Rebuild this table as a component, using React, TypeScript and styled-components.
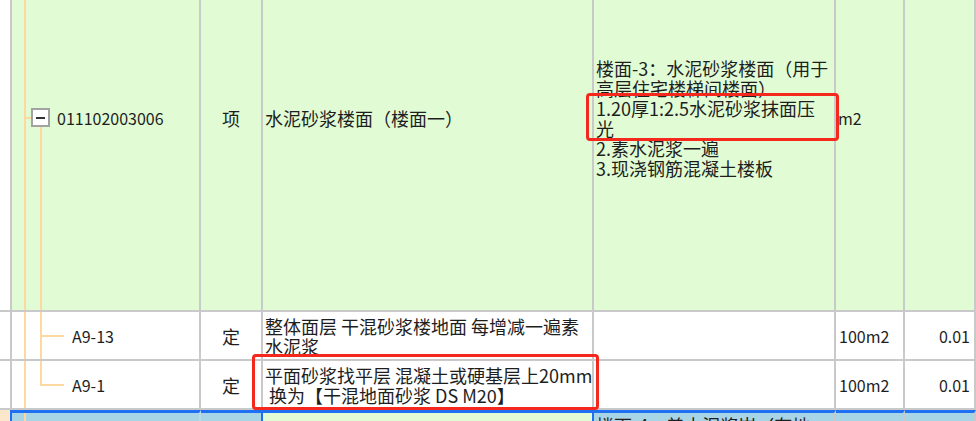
import React from "react";
import styled, { createGlobalStyle, css } from "styled-components";

const GREEN = "#e1fcd5";
const GRID = "#c9c9c9";
const ORANGE = "#fdd8a0";
const BLUE = "#1f6ff2";
const SEL = "#a8d5e5";
const PEACH = "#fde7cb";

const GlobalStyle = createGlobalStyle`
  html, body { margin: 0; padding: 0; background: #fff; overflow: hidden; }
  body {
    width: 976px; height: 421px;
    font-family: "Noto Sans CJK SC", "Noto Sans", sans-serif;
    color: #1e1e1e;
  }
`;

const Page = styled.div`
  position: relative;
  width: 976px;
  height: 421px;
  overflow: hidden;
`;

const Table = styled.div`
  margin-top: -75px;
  display: flex;
  flex-direction: column;
`;

const Row = styled.div<{ $h: number }>`
  display: grid;
  grid-template-columns: 12px 189px 62px 331px 242px 69px 1fr;
  height: ${(p) => p.$h}px;
`;

type Tone = "green" | "white" | "sel" | "peach";
const toneBg: Record<Tone, string> = {
  green: GREEN,
  white: "#ffffff",
  sel: SEL,
  peach: PEACH,
};

const Cell = styled.div<{
  $tone: Tone;
  $align?: "start" | "center" | "end";
  $selTop?: boolean;
  $rightColor?: string;
}>`
  box-sizing: border-box;
  min-width: 0;
  overflow: hidden;
  display: flex;
  align-items: center;
  justify-content: ${(p) =>
    p.$align === "center" ? "center" : p.$align === "end" ? "flex-end" : "flex-start"};
  background: ${(p) => toneBg[p.$tone]};
  border-right: 2px solid ${(p) => p.$rightColor ?? GRID};
  border-bottom: 2px solid ${GRID};
  ${(p) =>
    p.$selTop &&
    css`
      border-top: 3px solid ${BLUE};
      border-bottom: none;
      align-items: flex-start;
    `}
  font-size: 18px;
  line-height: 20px;
  white-space: nowrap;
`;

type Tree = "parent" | "child" | "last" | "trunk";
const line = (x: string, y: string, w: string, h: string) =>
  `linear-gradient(${ORANGE}, ${ORANGE}) ${x} ${y} / ${w} ${h} no-repeat`;

const treeBg = (t: Tree, base: string) => {
  const trunk = line("12px", "0", "2px", "100%");
  switch (t) {
    case "parent":
      return [trunk, line("14px", "50%", "6px", "2px"), line("28px", "100%", "2px", "50%"), base].join(", ");
    case "child":
      return [trunk, line("28px", "0", "2px", "100%"), line("28px", "50%", "24px", "2px"), base].join(", ");
    case "last":
      return [trunk, line("28px", "0", "2px", "50%"), line("28px", "50%", "24px", "2px"), base].join(", ");
    default:
      return [trunk, base].join(", ");
  }
};

const CodeCell = styled(Cell)<{ $tree: Tree; $pad: number }>`
  background: ${(p) => treeBg(p.$tree, toneBg[p.$tone])};
  padding-left: ${(p) => p.$pad}px;
  gap: 7px;
  font-size: 16px;
`;

const Toggle = styled.span`
  box-sizing: border-box;
  width: 19px;
  height: 19px;
  border: 2px solid #a3a3a3;
  background: #fff;
  display: flex;
  align-items: center;
  justify-content: center;
  &::after {
    content: "";
    width: 9px;
    height: 2px;
    background: #333;
  }
`;

const TextCell = styled(Cell)<{ $padL?: number; $padR?: number; $padT?: number }>`
  padding-left: ${(p) => p.$padL ?? 3}px;
  padding-right: ${(p) => p.$padR ?? 0}px;
  padding-top: ${(p) => p.$padT ?? 0}px;
`;

const NumCell = styled(TextCell)`
  font-size: 16px;
`;

const Lines = styled.div`
  display: flex;
  flex-direction: column;
`;

const Line = styled.span`
  display: block;
  white-space: pre;
`;

const Mark = styled.div<{ $x: number; $y: number; $w: number; $h: number }>`
  position: absolute;
  left: ${(p) => p.$x}px;
  top: ${(p) => p.$y}px;
  width: ${(p) => p.$w}px;
  height: ${(p) => p.$h}px;
  box-sizing: border-box;
  border: 3.5px solid #f4281d;
  border-radius: 4px;
  pointer-events: none;
`;

const MultiLine = ({ lines }: { lines: string[] }) => (
  <Lines>
    {lines.map((l, i) => (
      <Line key={i}>{l}</Line>
    ))}
  </Lines>
);

export default function App() {
  return (
    <>
      <GlobalStyle />
      <Page>
        <Table>
          <Row $h={387}>
            <Cell $tone="white" />
            <CodeCell $tone="green" $tree="parent" $pad={19}>
              <Toggle />
              <span>011102003006</span>
            </CodeCell>
            <Cell $tone="green" $align="center">项</Cell>
            <TextCell $tone="green" $padL={2}>水泥砂浆楼面（楼面一）</TextCell>
            <TextCell $tone="green" $padL={2}>
              <MultiLine
                lines={[
                  "楼面-3：水泥砂浆楼面（用于",
                  "高层住宅楼梯间楼面）",
                  "1.20厚1:2.5水泥砂浆抹面压",
                  "光",
                  "2.素水泥浆一遍",
                  "3.现浇钢筋混凝土楼板",
                ]}
              />
            </TextCell>
            <NumCell $tone="green" $padL={2}>m2</NumCell>
            <NumCell $tone="green" $align="end" $padR={4} />
          </Row>
          <Row $h={49}>
            <Cell $tone="white" />
            <CodeCell $tone="white" $tree="child" $pad={60}>A9-13</CodeCell>
            <Cell $tone="white" $align="center">定</Cell>
            <TextCell $tone="white" $padL={2}>
              <MultiLine lines={["整体面层 干混砂浆楼地面 每增减一遍素", "水泥浆"]} />
            </TextCell>
            <TextCell $tone="white" />
            <NumCell $tone="white" $padL={3}>100m2</NumCell>
            <NumCell $tone="white" $align="end" $padR={4}>0.01</NumCell>
          </Row>
          <Row $h={49}>
            <Cell $tone="white" />
            <CodeCell $tone="white" $tree="last" $pad={60}>A9-1</CodeCell>
            <Cell $tone="white" $align="center">定</Cell>
            <TextCell $tone="white" $padL={2}>
              <MultiLine lines={["平面砂浆找平层 混凝土或硬基层上20mm", " 换为【干混地面砂浆 DS M20】"]} />
            </TextCell>
            <TextCell $tone="white" />
            <NumCell $tone="white" $padL={3}>100m2</NumCell>
            <NumCell $tone="white" $align="end" $padR={4}>0.01</NumCell>
          </Row>
          <Row $h={40}>
            <Cell $tone="peach" $rightColor={BLUE} />
            <CodeCell $tone="sel" $tree="trunk" $pad={60} $selTop $rightColor="#b9d9e4" />
            <Cell $tone="sel" $selTop $rightColor={BLUE} />
            <TextCell $tone="green" $selTop $rightColor={BLUE} />
            <TextCell $tone="sel" $selTop $padL={2} $padT={2}>楼面-4：普水泥浆岸（有地</TextCell>
            <NumCell $tone="sel" $selTop />
            <NumCell $tone="sel" $selTop />
          </Row>
        </Table>
        <Mark $x={586} $y={93} $w={253} $h={48} />
        <Mark $x={252} $y={354} $w={347} $h={56} />
      </Page>
    </>
  );
}
